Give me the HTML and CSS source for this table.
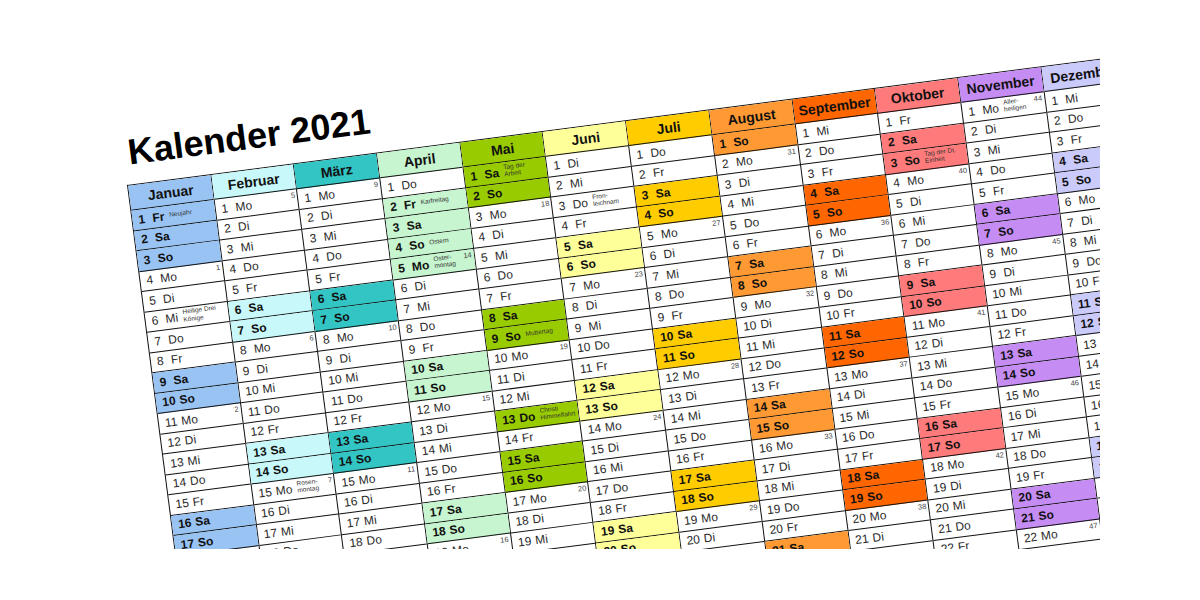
FILE: index.html
```html
<!DOCTYPE html>
<html lang="de">
<head>
<meta charset="utf-8">
<title>Kalender 2021</title>
<link rel="stylesheet" href="styles.css">
</head>
<body>
<div class="clip">
<div class="sheet">
<h1 class="title">Kalender 2021</h1>
<div class="cal">

<div class="m jan"><h2>Januar</h2>
<p class="h"><b>1</b><i>Fr</i><small>Neujahr</small></p>
<p class="h"><b>2</b><i>Sa</i></p>
<p class="h"><b>3</b><i>So</i></p>
<p><b>4</b><i>Mo</i><em>1</em></p>
<p><b>5</b><i>Di</i></p>
<p><b>6</b><i>Mi</i><small>Heilige Drei<br>Könige</small></p>
<p><b>7</b><i>Do</i></p>
<p><b>8</b><i>Fr</i></p>
<p class="h"><b>9</b><i>Sa</i></p>
<p class="h"><b>10</b><i>So</i></p>
<p><b>11</b><i>Mo</i><em>2</em></p>
<p><b>12</b><i>Di</i></p>
<p><b>13</b><i>Mi</i></p>
<p><b>14</b><i>Do</i></p>
<p><b>15</b><i>Fr</i></p>
<p class="h"><b>16</b><i>Sa</i></p>
<p class="h"><b>17</b><i>So</i></p>
<p><b>18</b><i>Mo</i><em>3</em></p>
<p><b>19</b><i>Di</i></p>
<p><b>20</b><i>Mi</i></p>
<p><b>21</b><i>Do</i></p>
<p><b>22</b><i>Fr</i></p>
<p class="h"><b>23</b><i>Sa</i></p>
<p class="h"><b>24</b><i>So</i></p>
<p><b>25</b><i>Mo</i><em>4</em></p>
<p><b>26</b><i>Di</i></p>
<p><b>27</b><i>Mi</i></p>
<p><b>28</b><i>Do</i></p>
<p><b>29</b><i>Fr</i></p>
<p class="h"><b>30</b><i>Sa</i></p>
<p class="h"><b>31</b><i>So</i></p>
</div>

<div class="m feb"><h2>Februar</h2>
<p><b>1</b><i>Mo</i><em>5</em></p>
<p><b>2</b><i>Di</i></p>
<p><b>3</b><i>Mi</i></p>
<p><b>4</b><i>Do</i></p>
<p><b>5</b><i>Fr</i></p>
<p class="h"><b>6</b><i>Sa</i></p>
<p class="h"><b>7</b><i>So</i></p>
<p><b>8</b><i>Mo</i><em>6</em></p>
<p><b>9</b><i>Di</i></p>
<p><b>10</b><i>Mi</i></p>
<p><b>11</b><i>Do</i></p>
<p><b>12</b><i>Fr</i></p>
<p class="h"><b>13</b><i>Sa</i></p>
<p class="h"><b>14</b><i>So</i></p>
<p><b>15</b><i>Mo</i><small>Rosen-<br>montag</small><em>7</em></p>
<p><b>16</b><i>Di</i></p>
<p><b>17</b><i>Mi</i></p>
<p><b>18</b><i>Do</i></p>
<p><b>19</b><i>Fr</i></p>
<p class="h"><b>20</b><i>Sa</i></p>
<p class="h"><b>21</b><i>So</i></p>
<p><b>22</b><i>Mo</i><em>8</em></p>
<p><b>23</b><i>Di</i></p>
<p><b>24</b><i>Mi</i></p>
<p><b>25</b><i>Do</i></p>
<p><b>26</b><i>Fr</i></p>
<p class="h"><b>27</b><i>Sa</i></p>
<p class="h"><b>28</b><i>So</i></p>
</div>

<div class="m mar"><h2>März</h2>
<p><b>1</b><i>Mo</i><em>9</em></p>
<p><b>2</b><i>Di</i></p>
<p><b>3</b><i>Mi</i></p>
<p><b>4</b><i>Do</i></p>
<p><b>5</b><i>Fr</i></p>
<p class="h"><b>6</b><i>Sa</i></p>
<p class="h"><b>7</b><i>So</i></p>
<p><b>8</b><i>Mo</i><em>10</em></p>
<p><b>9</b><i>Di</i></p>
<p><b>10</b><i>Mi</i></p>
<p><b>11</b><i>Do</i></p>
<p><b>12</b><i>Fr</i></p>
<p class="h"><b>13</b><i>Sa</i></p>
<p class="h"><b>14</b><i>So</i></p>
<p><b>15</b><i>Mo</i><em>11</em></p>
<p><b>16</b><i>Di</i></p>
<p><b>17</b><i>Mi</i></p>
<p><b>18</b><i>Do</i></p>
<p><b>19</b><i>Fr</i></p>
<p class="h"><b>20</b><i>Sa</i></p>
<p class="h"><b>21</b><i>So</i></p>
<p><b>22</b><i>Mo</i><em>12</em></p>
<p><b>23</b><i>Di</i></p>
<p><b>24</b><i>Mi</i></p>
<p><b>25</b><i>Do</i></p>
<p><b>26</b><i>Fr</i></p>
<p class="h"><b>27</b><i>Sa</i></p>
<p class="h"><b>28</b><i>So</i></p>
<p><b>29</b><i>Mo</i><em>13</em></p>
<p><b>30</b><i>Di</i></p>
<p><b>31</b><i>Mi</i></p>
</div>

<div class="m apr"><h2>April</h2>
<p><b>1</b><i>Do</i></p>
<p class="h"><b>2</b><i>Fr</i><small>Karfreitag</small></p>
<p class="h"><b>3</b><i>Sa</i></p>
<p class="h"><b>4</b><i>So</i><small>Ostern</small></p>
<p class="h"><b>5</b><i>Mo</i><small>Oster-<br>montag</small><em>14</em></p>
<p><b>6</b><i>Di</i></p>
<p><b>7</b><i>Mi</i></p>
<p><b>8</b><i>Do</i></p>
<p><b>9</b><i>Fr</i></p>
<p class="h"><b>10</b><i>Sa</i></p>
<p class="h"><b>11</b><i>So</i></p>
<p><b>12</b><i>Mo</i><em>15</em></p>
<p><b>13</b><i>Di</i></p>
<p><b>14</b><i>Mi</i></p>
<p><b>15</b><i>Do</i></p>
<p><b>16</b><i>Fr</i></p>
<p class="h"><b>17</b><i>Sa</i></p>
<p class="h"><b>18</b><i>So</i></p>
<p><b>19</b><i>Mo</i><em>16</em></p>
<p><b>20</b><i>Di</i></p>
<p><b>21</b><i>Mi</i></p>
<p><b>22</b><i>Do</i></p>
<p><b>23</b><i>Fr</i></p>
<p class="h"><b>24</b><i>Sa</i></p>
<p class="h"><b>25</b><i>So</i></p>
<p><b>26</b><i>Mo</i><em>17</em></p>
<p><b>27</b><i>Di</i></p>
<p><b>28</b><i>Mi</i></p>
<p><b>29</b><i>Do</i></p>
<p><b>30</b><i>Fr</i></p>
</div>

<div class="m mai"><h2>Mai</h2>
<p class="h"><b>1</b><i>Sa</i><small>Tag der<br>Arbeit</small></p>
<p class="h"><b>2</b><i>So</i></p>
<p><b>3</b><i>Mo</i><em>18</em></p>
<p><b>4</b><i>Di</i></p>
<p><b>5</b><i>Mi</i></p>
<p><b>6</b><i>Do</i></p>
<p><b>7</b><i>Fr</i></p>
<p class="h"><b>8</b><i>Sa</i></p>
<p class="h"><b>9</b><i>So</i><small>Muttertag</small></p>
<p><b>10</b><i>Mo</i><em>19</em></p>
<p><b>11</b><i>Di</i></p>
<p><b>12</b><i>Mi</i></p>
<p class="h"><b>13</b><i>Do</i><small>Christi<br>Himmelfahrt</small></p>
<p><b>14</b><i>Fr</i></p>
<p class="h"><b>15</b><i>Sa</i></p>
<p class="h"><b>16</b><i>So</i></p>
<p><b>17</b><i>Mo</i><em>20</em></p>
<p><b>18</b><i>Di</i></p>
<p><b>19</b><i>Mi</i></p>
<p><b>20</b><i>Do</i></p>
<p><b>21</b><i>Fr</i></p>
<p class="h"><b>22</b><i>Sa</i></p>
<p class="h"><b>23</b><i>So</i><small>Pfingsten</small></p>
<p class="h"><b>24</b><i>Mo</i><small>Pfingst-<br>montag</small><em>21</em></p>
<p><b>25</b><i>Di</i></p>
<p><b>26</b><i>Mi</i></p>
<p><b>27</b><i>Do</i></p>
<p><b>28</b><i>Fr</i></p>
<p class="h"><b>29</b><i>Sa</i></p>
<p class="h"><b>30</b><i>So</i></p>
<p><b>31</b><i>Mo</i><em>22</em></p>
</div>

<div class="m jun"><h2>Juni</h2>
<p><b>1</b><i>Di</i></p>
<p><b>2</b><i>Mi</i></p>
<p><b>3</b><i>Do</i><small>Fron-<br>leichnam</small></p>
<p><b>4</b><i>Fr</i></p>
<p class="h"><b>5</b><i>Sa</i></p>
<p class="h"><b>6</b><i>So</i></p>
<p><b>7</b><i>Mo</i><em>23</em></p>
<p><b>8</b><i>Di</i></p>
<p><b>9</b><i>Mi</i></p>
<p><b>10</b><i>Do</i></p>
<p><b>11</b><i>Fr</i></p>
<p class="h"><b>12</b><i>Sa</i></p>
<p class="h"><b>13</b><i>So</i></p>
<p><b>14</b><i>Mo</i><em>24</em></p>
<p><b>15</b><i>Di</i></p>
<p><b>16</b><i>Mi</i></p>
<p><b>17</b><i>Do</i></p>
<p><b>18</b><i>Fr</i></p>
<p class="h"><b>19</b><i>Sa</i></p>
<p class="h"><b>20</b><i>So</i></p>
<p><b>21</b><i>Mo</i><em>25</em></p>
<p><b>22</b><i>Di</i></p>
<p><b>23</b><i>Mi</i></p>
<p><b>24</b><i>Do</i></p>
<p><b>25</b><i>Fr</i></p>
<p class="h"><b>26</b><i>Sa</i></p>
<p class="h"><b>27</b><i>So</i></p>
<p><b>28</b><i>Mo</i><em>26</em></p>
<p><b>29</b><i>Di</i></p>
<p><b>30</b><i>Mi</i></p>
</div>

<div class="m jul"><h2>Juli</h2>
<p><b>1</b><i>Do</i></p>
<p><b>2</b><i>Fr</i></p>
<p class="h"><b>3</b><i>Sa</i></p>
<p class="h"><b>4</b><i>So</i></p>
<p><b>5</b><i>Mo</i><em>27</em></p>
<p><b>6</b><i>Di</i></p>
<p><b>7</b><i>Mi</i></p>
<p><b>8</b><i>Do</i></p>
<p><b>9</b><i>Fr</i></p>
<p class="h"><b>10</b><i>Sa</i></p>
<p class="h"><b>11</b><i>So</i></p>
<p><b>12</b><i>Mo</i><em>28</em></p>
<p><b>13</b><i>Di</i></p>
<p><b>14</b><i>Mi</i></p>
<p><b>15</b><i>Do</i></p>
<p><b>16</b><i>Fr</i></p>
<p class="h"><b>17</b><i>Sa</i></p>
<p class="h"><b>18</b><i>So</i></p>
<p><b>19</b><i>Mo</i><em>29</em></p>
<p><b>20</b><i>Di</i></p>
<p><b>21</b><i>Mi</i></p>
<p><b>22</b><i>Do</i></p>
<p><b>23</b><i>Fr</i></p>
<p class="h"><b>24</b><i>Sa</i></p>
<p class="h"><b>25</b><i>So</i></p>
<p><b>26</b><i>Mo</i><em>30</em></p>
<p><b>27</b><i>Di</i></p>
<p><b>28</b><i>Mi</i></p>
<p><b>29</b><i>Do</i></p>
<p><b>30</b><i>Fr</i></p>
<p class="h"><b>31</b><i>Sa</i></p>
</div>

<div class="m aug"><h2>August</h2>
<p class="h"><b>1</b><i>So</i></p>
<p><b>2</b><i>Mo</i><em>31</em></p>
<p><b>3</b><i>Di</i></p>
<p><b>4</b><i>Mi</i></p>
<p><b>5</b><i>Do</i></p>
<p><b>6</b><i>Fr</i></p>
<p class="h"><b>7</b><i>Sa</i></p>
<p class="h"><b>8</b><i>So</i></p>
<p><b>9</b><i>Mo</i><em>32</em></p>
<p><b>10</b><i>Di</i></p>
<p><b>11</b><i>Mi</i></p>
<p><b>12</b><i>Do</i></p>
<p><b>13</b><i>Fr</i></p>
<p class="h"><b>14</b><i>Sa</i></p>
<p class="h"><b>15</b><i>So</i></p>
<p><b>16</b><i>Mo</i><em>33</em></p>
<p><b>17</b><i>Di</i></p>
<p><b>18</b><i>Mi</i></p>
<p><b>19</b><i>Do</i></p>
<p><b>20</b><i>Fr</i></p>
<p class="h"><b>21</b><i>Sa</i></p>
<p class="h"><b>22</b><i>So</i></p>
<p><b>23</b><i>Mo</i><em>34</em></p>
<p><b>24</b><i>Di</i></p>
<p><b>25</b><i>Mi</i></p>
<p><b>26</b><i>Do</i></p>
<p><b>27</b><i>Fr</i></p>
<p class="h"><b>28</b><i>Sa</i></p>
<p class="h"><b>29</b><i>So</i></p>
<p><b>30</b><i>Mo</i><em>35</em></p>
<p><b>31</b><i>Di</i></p>
</div>

<div class="m sep"><h2>September</h2>
<p><b>1</b><i>Mi</i></p>
<p><b>2</b><i>Do</i></p>
<p><b>3</b><i>Fr</i></p>
<p class="h"><b>4</b><i>Sa</i></p>
<p class="h"><b>5</b><i>So</i></p>
<p><b>6</b><i>Mo</i><em>36</em></p>
<p><b>7</b><i>Di</i></p>
<p><b>8</b><i>Mi</i></p>
<p><b>9</b><i>Do</i></p>
<p><b>10</b><i>Fr</i></p>
<p class="h"><b>11</b><i>Sa</i></p>
<p class="h"><b>12</b><i>So</i></p>
<p><b>13</b><i>Mo</i><em>37</em></p>
<p><b>14</b><i>Di</i></p>
<p><b>15</b><i>Mi</i></p>
<p><b>16</b><i>Do</i></p>
<p><b>17</b><i>Fr</i></p>
<p class="h"><b>18</b><i>Sa</i></p>
<p class="h"><b>19</b><i>So</i></p>
<p><b>20</b><i>Mo</i><em>38</em></p>
<p><b>21</b><i>Di</i></p>
<p><b>22</b><i>Mi</i></p>
<p><b>23</b><i>Do</i></p>
<p><b>24</b><i>Fr</i></p>
<p class="h"><b>25</b><i>Sa</i></p>
<p class="h"><b>26</b><i>So</i></p>
<p><b>27</b><i>Mo</i><em>39</em></p>
<p><b>28</b><i>Di</i></p>
<p><b>29</b><i>Mi</i></p>
<p><b>30</b><i>Do</i></p>
</div>

<div class="m okt"><h2>Oktober</h2>
<p><b>1</b><i>Fr</i></p>
<p class="h"><b>2</b><i>Sa</i></p>
<p class="h"><b>3</b><i>So</i><small>Tag der Dt.<br>Einheit</small></p>
<p><b>4</b><i>Mo</i><em>40</em></p>
<p><b>5</b><i>Di</i></p>
<p><b>6</b><i>Mi</i></p>
<p><b>7</b><i>Do</i></p>
<p><b>8</b><i>Fr</i></p>
<p class="h"><b>9</b><i>Sa</i></p>
<p class="h"><b>10</b><i>So</i></p>
<p><b>11</b><i>Mo</i><em>41</em></p>
<p><b>12</b><i>Di</i></p>
<p><b>13</b><i>Mi</i></p>
<p><b>14</b><i>Do</i></p>
<p><b>15</b><i>Fr</i></p>
<p class="h"><b>16</b><i>Sa</i></p>
<p class="h"><b>17</b><i>So</i></p>
<p><b>18</b><i>Mo</i><em>42</em></p>
<p><b>19</b><i>Di</i></p>
<p><b>20</b><i>Mi</i></p>
<p><b>21</b><i>Do</i></p>
<p><b>22</b><i>Fr</i></p>
<p class="h"><b>23</b><i>Sa</i></p>
<p class="h"><b>24</b><i>So</i></p>
<p><b>25</b><i>Mo</i><em>43</em></p>
<p><b>26</b><i>Di</i></p>
<p><b>27</b><i>Mi</i></p>
<p><b>28</b><i>Do</i></p>
<p><b>29</b><i>Fr</i></p>
<p class="h"><b>30</b><i>Sa</i></p>
<p class="h"><b>31</b><i>So</i></p>
</div>

<div class="m nov"><h2>November</h2>
<p><b>1</b><i>Mo</i><small>Aller-<br>heiligen</small><em>44</em></p>
<p><b>2</b><i>Di</i></p>
<p><b>3</b><i>Mi</i></p>
<p><b>4</b><i>Do</i></p>
<p><b>5</b><i>Fr</i></p>
<p class="h"><b>6</b><i>Sa</i></p>
<p class="h"><b>7</b><i>So</i></p>
<p><b>8</b><i>Mo</i><em>45</em></p>
<p><b>9</b><i>Di</i></p>
<p><b>10</b><i>Mi</i></p>
<p><b>11</b><i>Do</i></p>
<p><b>12</b><i>Fr</i></p>
<p class="h"><b>13</b><i>Sa</i></p>
<p class="h"><b>14</b><i>So</i></p>
<p><b>15</b><i>Mo</i><em>46</em></p>
<p><b>16</b><i>Di</i></p>
<p><b>17</b><i>Mi</i></p>
<p><b>18</b><i>Do</i></p>
<p><b>19</b><i>Fr</i></p>
<p class="h"><b>20</b><i>Sa</i></p>
<p class="h"><b>21</b><i>So</i></p>
<p><b>22</b><i>Mo</i><em>47</em></p>
<p><b>23</b><i>Di</i></p>
<p><b>24</b><i>Mi</i></p>
<p><b>25</b><i>Do</i></p>
<p><b>26</b><i>Fr</i></p>
<p class="h"><b>27</b><i>Sa</i></p>
<p class="h"><b>28</b><i>So</i></p>
<p><b>29</b><i>Mo</i><em>48</em></p>
<p><b>30</b><i>Di</i></p>
</div>

<div class="m dez"><h2>Dezember</h2>
<p><b>1</b><i>Mi</i></p>
<p><b>2</b><i>Do</i></p>
<p><b>3</b><i>Fr</i></p>
<p class="h"><b>4</b><i>Sa</i></p>
<p class="h"><b>5</b><i>So</i></p>
<p><b>6</b><i>Mo</i><em>49</em></p>
<p><b>7</b><i>Di</i></p>
<p><b>8</b><i>Mi</i></p>
<p><b>9</b><i>Do</i></p>
<p><b>10</b><i>Fr</i></p>
<p class="h"><b>11</b><i>Sa</i></p>
<p class="h"><b>12</b><i>So</i></p>
<p><b>13</b><i>Mo</i><em>50</em></p>
<p><b>14</b><i>Di</i></p>
<p><b>15</b><i>Mi</i></p>
<p><b>16</b><i>Do</i></p>
<p><b>17</b><i>Fr</i></p>
<p class="h"><b>18</b><i>Sa</i></p>
<p class="h"><b>19</b><i>So</i></p>
<p><b>20</b><i>Mo</i><em>51</em></p>
<p><b>21</b><i>Di</i></p>
<p><b>22</b><i>Mi</i></p>
<p><b>23</b><i>Do</i></p>
<p><b>24</b><i>Fr</i><small>Heilig-<br>abend</small></p>
<p class="h"><b>25</b><i>Sa</i><small>1. Weih-<br>nachtstag</small></p>
<p class="h"><b>26</b><i>So</i><small>2. Weih-<br>nachtstag</small></p>
<p><b>27</b><i>Mo</i><em>52</em></p>
<p><b>28</b><i>Di</i></p>
<p><b>29</b><i>Mi</i></p>
<p><b>30</b><i>Do</i></p>
<p><b>31</b><i>Fr</i><small>Silvester</small></p>
</div>

</div>
</div>
</div>
</body>
</html>
```
FILE: styles.css
```css
* {
  box-sizing: border-box;
}

body {
  margin: 0;
  background: #fff;
  font-family: "Liberation Sans", Arial, sans-serif;
}

.clip {
  width: 1100px;
  height: 549px;
  overflow: hidden;
  padding: 135px 0 0 126.7px;
}

.sheet {
  width: 1005.4px;
  transform: rotate(-7.4deg);
  transform-origin: 0 50px;
}

.title {
  height: 50px;
  margin: 0;
  padding: 0 0 0 5px;
  font-size: 36px;
  line-height: 36px;
  font-weight: bold;
  color: #000;
  white-space: nowrap;
}

.cal {
  display: flex;
  border-left: 1px solid #111;
  border-top: 1px solid #111;
}

.m {
  width: 83.7px;
  flex: none;
  border-right: 1px solid #111;
}

.m h2 {
  margin: 0;
  height: 25px;
  border-bottom: 1px solid #111;
  background: var(--c);
  font-size: 14px;
  line-height: 24px;
  text-align: center;
  color: #111;
  white-space: nowrap;
  overflow: hidden;
}

.m p {
  margin: 0;
  height: 20.5px;
  border-bottom: 1px solid #111;
  display: flex;
  align-items: center;
  padding-left: 6px;
  font-size: 12px;
  color: #2a2a2a;
  white-space: nowrap;
  overflow: hidden;
}

.m p.h {
  background: var(--c);
  font-weight: bold;
  color: #111;
}

.m b {
  flex: none;
  min-width: 10px;
  margin-right: 4px;
  font-weight: inherit;
}

.m i {
  flex: none;
  font-style: normal;
}

.m small {
  margin: 0 0 3px 5px;
  font-size: 6.5px;
  line-height: 7.5px;
  font-weight: normal;
  color: #333;
}

.m em {
  margin: 2px 0 0 auto;
  align-self: flex-start;
  padding-right: 2px;
  font-size: 7.5px;
  line-height: 8px;
  font-style: normal;
  font-weight: normal;
  color: #444;
}

.jan { --c: #99c3f3; }
.feb { --c: #c8f8fa; }
.mar { --c: #33c4c4; }
.apr { --c: #c6f5cf; }
.mai { --c: #99cc00; }
.jun { --c: #ffff99; }
.jul { --c: #ffcc00; }
.aug { --c: #ff9933; }
.sep { --c: #ff6600; }
.okt { --c: #ff7b7b; }
.nov { --c: #c58cf4; }
.dez { --c: #cacafb; }
```
